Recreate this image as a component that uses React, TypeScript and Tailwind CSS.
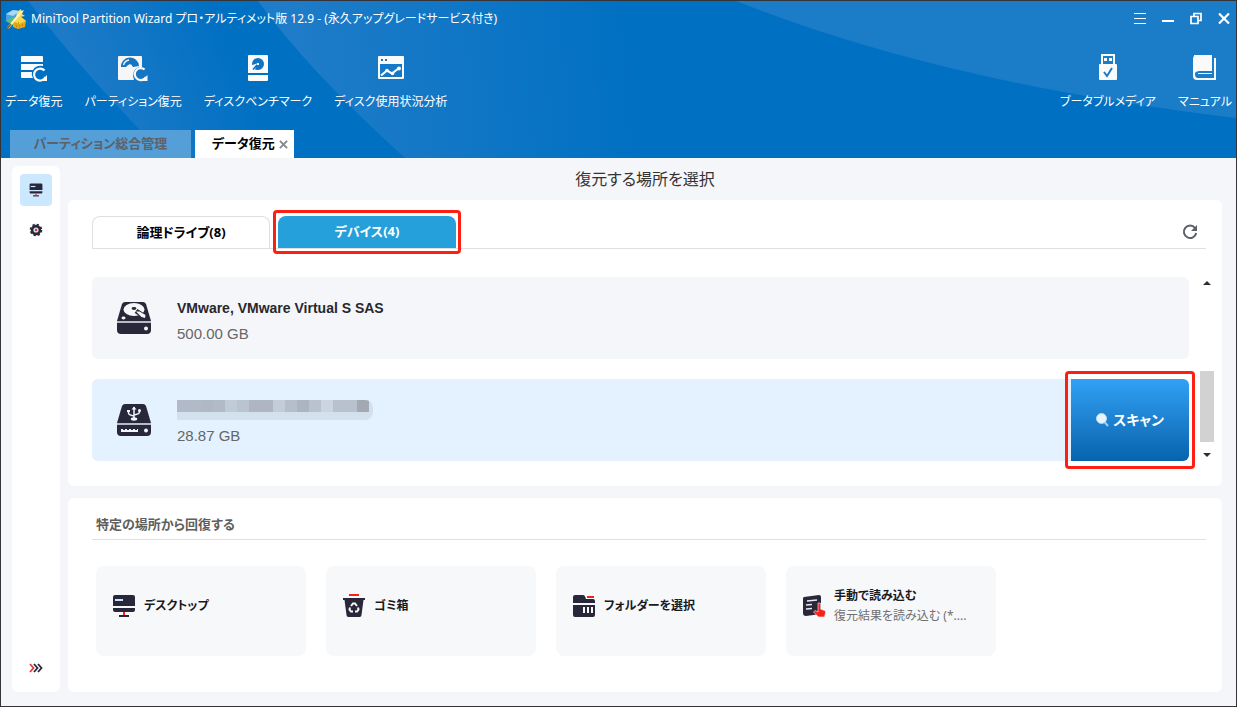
import React, { useState } from 'react';

const DARK = '#28283a';
const RED = '#f7231b';

const AppLogo: React.FC = () => (
  <svg width="22" height="22" viewBox="0 0 22 22" aria-hidden="true">
    <path d="M1 6 L8 2 L15 3 L14 12 L8 17 L1 13 Z" fill="#4aa3e0" />
    <path d="M1 6 L8 2 L15 3 L8 8 Z" fill="#a9d8f6" />
    <path d="M1 13 L8 17 L12 12 L9 9 Z" fill="#5fbf6a" />
    <path d="M8 13 L15 8 L21 13 L20 19 L13 21 L8 19 Z" fill="#e6a817" />
    <path d="M8 13 L15 8 L21 13 L14 16 Z" fill="#f9d64a" />
    <path d="M12 4 L16 1 L16 3 L19 2 L17 6 L20 8 L15 9 L11 10 Z" fill="#f6dc6b" />
    <path d="M17 3 L3 20" stroke="#fff3b8" strokeWidth="2" />
    <path d="M6 16 L2 21" stroke="#8a5a16" strokeWidth="1.5" />
    <path d="M11 18 h1 M14 18 h1 M17 17 h1 M13 15 h1" stroke="#a86c08" />
  </svg>
);

const DataRecoveryIcon: React.FC = () => (
  <svg width="28" height="30" viewBox="0 0 28 30" aria-hidden="true">
    <path d="M1 5 a1 1 0 0 1 1 -1 h20 a1 1 0 0 1 1 1 v5 h-22 z M1 12 h22 v2 q-7 -1 -10 4 h-12 z M1 20 h11 q-1 3 1 6 h-11 a1 1 0 0 1 -1 -1 z" fill="#fafafa" />
    <path d="M24.5 18.5 A6 6 0 1 0 25.6 25" fill="none" stroke="#fafafa" strokeWidth="2.2" />
    <path d="M27 23 v6 h-6 z" fill="#fafafa" />
  </svg>
);

const PartitionRecoveryIcon: React.FC = () => (
  <svg width="32" height="30" viewBox="0 0 32 30" aria-hidden="true">
    <path d="M2 4 h22 a1 1 0 0 1 1 1 v10 q-9 0 -9 9 l1 4 h-15 a1 1 0 0 1 -1 -1 v-22 a1 1 0 0 1 1 -1 z" fill="#f6f6f6" />
    <path d="M4 15 A9 9 0 0 1 22 14 L16 15 A4 4 0 0 0 9 15 Z" fill="#1576c4" />
    <path d="M6.500 13 A7 7 0 0 1 12 8" stroke="#f6f6f6" strokeWidth="1.400" fill="none" />
    <circle cx="13" cy="14.500" r="2.200" fill="#f6f6f6" />
    <circle cx="24" cy="22" r="7" fill="#1576c4" />
    <path d="M27.600 17.500 A6 6 0 1 0 29 25" fill="none" stroke="#fafafa" strokeWidth="2.200" />
    <path d="M30.500 23 v6 h-6 z" fill="#fafafa" />
  </svg>
);

const BenchmarkIcon: React.FC = () => (
  <svg width="22" height="30" viewBox="0 0 22 30" aria-hidden="true">
    <path d="M2 3 h18 a1 1 0 0 1 1 1 v17 h-20 v-17 a1 1 0 0 1 1 -1 z M1 23 h20 v5 a1 1 0 0 1 -1 1 h-18 a1 1 0 0 1 -1 -1 z" fill="#fafafa" />
    <circle cx="11" cy="12" r="6" fill="#0f74c3" />
    <path d="M10 11.500 L4 13.500 L7.500 18.500 Z" fill="#fafafa" />
    <path d="M10 13 L6 17.500" stroke="#0f74c3" strokeWidth="1.600" />
    <rect x="10" y="11" width="2" height="2" fill="#fafafa" />
  </svg>
);

const UsageIcon: React.FC = () => (
  <svg width="28" height="30" viewBox="0 0 28 30" aria-hidden="true">
    <path fillRule="evenodd" d="M2 4 h24 a1 1 0 0 1 1 1 v21 a1 1 0 0 1 -1 1 h-24 a1 1 0 0 1 -1 -1 v-21 a1 1 0 0 1 1 -1 z M3 12 v13 h22 v-13 z M4 7 v2 h2 v-2 z M8 7 v2 h2 v-2 z" fill="#fafafa" />
    <path d="M4 23.500 L10 18.500 L15 21.500 L22 16" stroke="#fafafa" strokeWidth="2.200" fill="none" />
    <circle cx="10" cy="18.500" r="1.800" fill="#fafafa" />
    <circle cx="15.500" cy="21.500" r="1.800" fill="#fafafa" />
    <circle cx="22" cy="16.500" r="2" fill="#fafafa" />
  </svg>
);

const UsbStickIcon: React.FC = () => (
  <svg width="20" height="30" viewBox="0 0 20 30" aria-hidden="true">
    <path fillRule="evenodd" d="M3 2 h14 v10 h1 a1 1 0 0 1 1 1 v14 a1 1 0 0 1 -1 1 h-16 a1 1 0 0 1 -1 -1 v-14 a1 1 0 0 1 1 -1 h1 z M5 4 v8 h10 v-8 z" fill="#fafafa" />
    <path d="M6 6 h3 v3 h-3 z M11 6 h3 v3 h-3 z" fill="#fafafa" />
    <path d="M6 20 L9 24 L14 16" stroke="#1b7cc8" strokeWidth="2" fill="none" />
  </svg>
);

const ManualIcon: React.FC = () => (
  <svg width="26" height="30" viewBox="0 0 26 30" aria-hidden="true">
    <path d="M5 3 h15 v16 h-13 q-4 0 -4 3 q0 4 3 4 h16 v-20 h2 v22 h-19 q-4 0 -4 -4 v-17 q0 -4 4 -4 z" fill="#fafafa" />
    <path d="M2 3 h5 v16 q-4 0 -5 2 z" fill="#fafafa" />
    <path d="M6 22 h14 v-1 h-14 z" fill="#fafafa" />
  </svg>
);

const MonitorIcon: React.FC<{ size: number }> = ({ size }) => (
  <svg width={size} height={size} viewBox="0 0 24 24" aria-hidden="true">
    <path d="M3 1 h18 a2 2 0 0 1 2 2 v9 h-22 v-9 a2 2 0 0 1 2 -2 z M1 14 h22 v2 a2 2 0 0 1 -2 2 h-18 a2 2 0 0 1 -2 -2 z" fill={DARK} />
    <rect x="3" y="5" width="8" height="2" fill="#cbe6fa" />
    <rect x="7" y="21" width="10" height="2" fill={DARK} />
    <rect x="11" y="18" width="2" height="3" fill={RED} />
  </svg>
);

const GearIcon: React.FC = () => (
  <svg width="14" height="14" viewBox="0 0 14 14" aria-hidden="true">
    <circle cx="7" cy="7" r="5.200" fill={DARK} />
    <circle cx="7" cy="7" r="5.500" fill="none" stroke={DARK} strokeWidth="1.600" strokeDasharray="2.400 1.920" />
    <circle cx="7" cy="7" r="2.600" fill="#d7e3ee" />
    <circle cx="7" cy="7" r="1.200" fill={RED} />
  </svg>
);

const ExpandIcon: React.FC = () => (
  <svg width="14" height="10" viewBox="0 0 14 10" fill="none" strokeWidth="1.800" aria-hidden="true">
    <path d="M1 1 L4.500 5 L1 9" stroke="#e33a34" />
    <path d="M5 1 L8.500 5 L5 9 M9 1 L12.500 5 L9 9" stroke={DARK} />
  </svg>
);

const DriveIcon: React.FC = () => (
  <svg width="36" height="34" viewBox="0 0 36 34" aria-hidden="true">
    <path d="M9 1 h18 q2 0 3 2 l5 17 h-34 l5 -17 q1 -2 3 -2 z" fill={DARK} />
    <path d="M1 22 h34 v7 q0 4 -4 4 h-26 q-4 0 -4 -4 z" fill={DARK} />
    <rect x="1" y="20" width="34" height="2" fill="#b9bac4" />
    <ellipse cx="18" cy="8.500" rx="10.500" ry="6.500" fill="#f5f6fa" />
    <ellipse cx="18" cy="7.500" rx="2.400" ry="1.400" fill={DARK} />
    <path d="M20 10 L31 17" stroke={DARK} strokeWidth="5" />
    <path d="M20 10.500 L23.500 10.500 L29.500 14 L29 17 L25.500 16 Z" fill="#f5f6fa" />
    <ellipse cx="7.500" cy="17" rx="2" ry="1.400" fill="#f5f6fa" />
    <circle cx="30" cy="27.500" r="2" fill="#f5f6fa" />
  </svg>
);

const UsbDriveIcon: React.FC = () => (
  <svg width="36" height="34" viewBox="0 0 36 34" aria-hidden="true">
    <path d="M9 1 h18 q2 0 3 2 l5 17 h-34 l5 -17 q1 -2 3 -2 z" fill={DARK} />
    <path d="M1 22 h34 v7 q0 4 -4 4 h-26 q-4 0 -4 -4 z" fill={DARK} />
    <rect x="1" y="20" width="34" height="2" fill="#b4bcc8" />
    <path d="M18 4 V16 M12.500 8 V10 Q12.500 12 18 13 M23.500 7 V9 Q23.500 11 18 12" stroke="#eef7ff" strokeWidth="1.500" fill="none" />
    <path d="M15.500 6.500 L18 3.500 L20.500 6.500 Z" fill="#eef7ff" />
    <ellipse cx="18" cy="16" rx="3.200" ry="1.700" fill="#eef7ff" />
    <rect x="11" y="7" width="3" height="2" fill="#eef7ff" />
    <circle cx="23.500" cy="7.500" r="1.500" fill="#eef7ff" />
    <path d="M5 26 h2 v1 h2 v-1 h2 v1 h2 v-1 h2 v1 h2 v-1 h2 v1 h2 v-1 h1 v3 h-17 z" fill="#eef7ff" />
    <circle cx="30" cy="27.500" r="2" fill="#eef7ff" />
  </svg>
);

const TrashIcon: React.FC = () => (
  <svg width="24" height="26" viewBox="0 0 24 26" aria-hidden="true">
    <rect x="7" y="1" width="10" height="2" fill={RED} />
    <path d="M1 5 h22 v2 h-1.500 l-2 15 q0 2 -2 2 h-11 q-2 0 -2 -2 l-2 -15 h-1.500 z" fill={DARK} />
    <g fill="none" stroke="#f7f8fa" strokeWidth="2">
      <path d="M9 13 L11 10.500 H13 L15 13" />
      <path d="M16 14.500 L16.500 16.500 L15 18.500 H13" />
      <path d="M11 18.500 H9 L7.500 16.500 L8 14.500" />
    </g>
  </svg>
);

const FolderIcon: React.FC = () => (
  <svg width="24" height="24" viewBox="0 0 24 24" aria-hidden="true">
    <path d="M3 1 h8 q2 0 3 4 h7 a2 2 0 0 1 2 2 v2 h-22 v-6 a2 2 0 0 1 2 -2 z M1 11 h22 v10 a2 2 0 0 1 -2 2 h-18 a2 2 0 0 1 -2 -2 z" fill={DARK} />
    <rect x="15" y="2" width="7" height="2" fill={RED} />
    <path d="M12 13 v6 M16 13 v6 M20 13 v6" stroke="#f7f8fa" strokeWidth="2" />
  </svg>
);

const LoadIcon: React.FC = () => (
  <svg width="24" height="24" viewBox="0 0 24 24" aria-hidden="true">
    <path d="M2 3 L17 1 q2 0 2 2 V20 L4 22 q-3 0 -3 -3 V5 q0 -2 1 -2 z" fill={DARK} />
    <path d="M5 7 L15 6 M4 11 L10 10.500 M4 15 L10 14.500" stroke="#e8eaf0" strokeWidth="1.600" />
    <path d="M16 9 h2.500 v6 l4 1.500 q1.500 .5 1 2.500 l-1 4 h-6 l-5 -5 l1.500 -1.500 l3 1.500 z" fill={RED} stroke="#f7f8fa" strokeWidth=".6" />
  </svg>
);

const RefreshIcon: React.FC = () => (
  <svg width="16" height="16" viewBox="0 0 16 16" aria-hidden="true">
    <path d="M13 4 A6.200 6.200 0 1 0 14.200 9" fill="none" stroke="#5c5f66" strokeWidth="2" />
    <path d="M15 1 V7 H9 Z" fill="#5c5f66" />
  </svg>
);

const MagnifierIcon: React.FC = () => (
  <svg width="13" height="14" viewBox="0 0 13 14" aria-hidden="true">
    <path d="M8.500 9 L12 13" stroke="#9ccdf5" strokeWidth="2" />
    <circle cx="5.500" cy="5.500" r="5" fill="#e8f3fc" stroke="#b4d9f7" />
  </svg>
);

const HeaderBackdrop: React.FC = () => (
  <svg className="absolute inset-0 h-full w-full" viewBox="0 0 1235 157" preserveAspectRatio="none" aria-hidden="true">
    <defs>
      <linearGradient id="facetLeft" x1="50" y1="90" x2="225" y2="20" gradientUnits="userSpaceOnUse">
        <stop offset="0.200" stopColor="#1c7ac7" />
        <stop offset="1" stopColor="#0070c2" />
      </linearGradient>
      <linearGradient id="facetMiddle" x1="290" y1="90" x2="640" y2="60" gradientUnits="userSpaceOnUse">
        <stop offset="0" stopColor="#1f7cc8" />
        <stop offset="1" stopColor="#0070c2" />
      </linearGradient>
    </defs>
    <path d="M27 0 H257 L404 157 H166 Q85 75 27 0 Z" fill="url(#facetLeft)" />
    <path d="M257 0 H640 V157 H404 Q306 68 257 0 Z" fill="url(#facetMiddle)" />
    <path d="M735 0 Q940 82 1235 117 V0 Z" fill="#1b7cc8" />
  </svg>
);

const leftTools = [
  { label: 'データ復元', icon: <DataRecoveryIcon /> },
  { label: 'パーティション復元', icon: <PartitionRecoveryIcon /> },
  { label: 'ディスクベンチマーク', icon: <BenchmarkIcon /> },
  { label: 'ディスク使用状況分析', icon: <UsageIcon /> },
];

const rightTools = [
  { label: 'ブータブルメディア', icon: <UsbStickIcon /> },
  { label: 'マニュアル', icon: <ManualIcon /> },
];

const places = [
  { title: 'デスクトップ', icon: <MonitorIcon size={24} /> },
  { title: 'ゴミ箱', icon: <TrashIcon /> },
  { title: 'フォルダーを選択', icon: <FolderIcon /> },
  { title: '手動で読み込む', note: '復元結果を読み込む (*....', icon: <LoadIcon /> },
];

// hidden device name, drawn as coarse blocks
const mosaic = [
  'bg-[#b3bac7]', 'bg-[#b3bac7]', 'bg-[#b0b8c5]', 'bg-[#b3bac7]', 'bg-[#c0cbd8]', 'bg-[#bac4d1]', 'bg-[#afb5c2]', 'bg-[#afb5c2]',
  'bg-[#c3cdda]', 'bg-[#b5bfcc]', 'bg-[#acb4c2]', 'bg-[#b9c2cf]', 'bg-[#cbd4e1]', 'bg-[#b8c1ce]', 'bg-[#b8c1ce]', 'bg-[#a3a8b3]',
];

interface ToolButtonProps {
  label: string;
  icon: React.ReactNode;
}

const ToolButton: React.FC<ToolButtonProps> = ({ label, icon }) => (
  <button type="button" className="flex flex-col items-center gap-3 whitespace-nowrap text-xs leading-4 text-white">
    {icon}
    <span>{label}</span>
  </button>
);

const App: React.FC = () => {
  const [tab, setTab] = useState<'drives' | 'devices'>('devices');

  const tabClass = (name: 'drives' | 'devices') =>
    tab === name
      ? 'h-8 w-full rounded-t-lg bg-[#26a0da] text-white'
      : 'h-8 w-full rounded-t-lg border border-b-0 border-[#e0e0e0] bg-white text-black';

  return (
    <div className="flex min-h-screen flex-col border border-[#333338] bg-[#f5f6fa] font-['Noto_Sans','Noto_Sans_CJK_JP',sans-serif] text-xs [font-feature-settings:'palt']">
      <header className="relative bg-[#0070c2]">
        <HeaderBackdrop />
        <div className="relative">
          <div className="flex h-[35px] items-center justify-between pr-1.5 pl-1">
            <div className="flex items-center gap-1">
              <AppLogo />
              <h1 className="text-xs text-white">MiniTool Partition Wizard プロ・アルティメット版 12.9 - (永久アップグレードサービス付き)</h1>
            </div>
            <div className="flex items-center gap-4">
              <button type="button" aria-label="メニュー">
                <svg width="12" height="14" viewBox="0 0 12 14"><path d="M0 1.500 h12 M0 6.500 h12 M0 11.500 h12" stroke="#fff" /></svg>
              </button>
              <button type="button" aria-label="最小化">
                <svg width="12" height="14" viewBox="0 0 12 14"><path d="M0 9 h12" stroke="#fff" strokeWidth="2" /></svg>
              </button>
              <button type="button" aria-label="元に戻す">
                <svg width="12" height="14" viewBox="0 0 12 14" fill="none" stroke="#fff" strokeWidth="1.700"><path d="M1 4.500 h7 v7 h-7 z M4 4 v-2.500 h7 v7 h-3" /></svg>
              </button>
              <button type="button" aria-label="閉じる">
                <svg width="12" height="14" viewBox="0 0 12 14"><path d="M1 1.500 L11 11.500 M11 1.500 L1 11.500" stroke="#fff" strokeWidth="2.200" /></svg>
              </button>
            </div>
          </div>

          <div className="flex justify-between px-1 pt-4 pb-5">
            <div className="flex gap-[22px]">
              {leftTools.map((tool) => <ToolButton key={tool.label} {...tool} />)}
            </div>
            <div className="flex gap-[22px]">
              {rightTools.map((tool) => <ToolButton key={tool.label} {...tool} />)}
            </div>
          </div>

          <div className="flex gap-1 pl-[9px]">
            <button type="button" className="h-7 w-[181px] bg-[#559fd8] text-[13px] font-bold text-[#5f6169]">パーティション総合管理</button>
            <div className="flex h-7 items-center gap-1 bg-white pr-[6px] pl-[17px]">
              <button type="button" className="text-[13px] font-bold text-black">データ復元</button>
              <button type="button" aria-label="タブを閉じる">
                <svg width="9" height="9" viewBox="0 0 10 10"><path d="M1 1 L9 9 M9 1 L1 9" stroke="#85858b" strokeWidth="2" /></svg>
              </button>
            </div>
          </div>
        </div>
      </header>

      <div className="flex flex-1 gap-2 pt-2 pr-3.5 pb-3.5 pl-[11px]">
        <nav className="flex w-12 shrink-0 flex-col items-center gap-2 rounded-md bg-white py-2">
          <button type="button" aria-label="ドライブ" className="flex size-8 items-center justify-center rounded bg-[#cce8ff]"><MonitorIcon size={14} /></button>
          <button type="button" aria-label="設定" className="flex size-8 items-center justify-center"><GearIcon /></button>
          <button type="button" aria-label="展開" className="mt-auto flex size-8 items-center justify-center"><ExpandIcon /></button>
        </nav>

        <main className="flex min-w-0 flex-1 flex-col">
          <h2 className="mb-2 text-center text-base leading-[26px] text-[#333]">復元する場所を選択</h2>

          <section className="rounded-md bg-white pt-4 pb-[25px] pl-6">
            <div className="mr-4 flex items-end gap-2 border-b border-[#e0e0e0]">
              <div className="w-[178px]">
                <button type="button" onClick={() => setTab('drives')} className={`${tabClass('drives')} text-[13px] font-bold`}>論理ドライブ(8)</button>
              </div>
              <div className="relative w-[178px]">
                <button type="button" onClick={() => setTab('devices')} className={`${tabClass('devices')} text-[13px] font-bold`}>デバイス(4)</button>
                <div className="pointer-events-none absolute -inset-x-[5px] -inset-y-[6px] rounded border-3 border-[#fb2012]" />
              </div>
              <button type="button" aria-label="更新" className="mr-2 mb-2 ml-auto"><RefreshIcon /></button>
            </div>

            <div className="mt-7 flex gap-[11px] pr-2">
              <ul className="flex flex-1 flex-col gap-5">
                <li className="flex h-[82px] items-center gap-[25px] rounded-md bg-[#f5f6fa] pl-6">
                  <DriveIcon />
                  <div className="pt-[5px] font-['Liberation_Sans',sans-serif]">
                    <p className="text-sm leading-[26px] font-bold text-[#28282c]">VMware, VMware Virtual S SAS</p>
                    <p className="text-[15px] leading-[26px] text-[#666]">500.00 GB</p>
                  </div>
                </li>
                <li className="flex h-[82px] items-center gap-[25px] rounded-md bg-[#e3f2fe] pl-6">
                  <UsbDriveIcon />
                  <div className="pt-[5px] font-['Liberation_Sans',sans-serif]">
                    <div className="flex h-[26px] items-center">
                      <div className="overflow-hidden rounded-r-lg bg-[#d3e0ed]">
                        <div className="flex pr-1">
                          {mosaic.map((color, i) => <span key={i} className={`h-3 w-3 ${color}`} />)}
                        </div>
                        <div className="h-2" />
                      </div>
                    </div>
                    <p className="text-[15px] leading-[26px] text-[#666]">28.87 GB</p>
                  </div>
                  <div className="relative ml-auto h-full w-[118px]">
                    <button type="button" className="flex h-full w-full items-center justify-center gap-1 rounded-r-md bg-linear-to-b from-[#31a1f5] to-[#0763ac] text-sm font-bold text-white">
                      <MagnifierIcon />
                      スキャン
                    </button>
                    <div className="pointer-events-none absolute -inset-x-[6px] -inset-y-2 rounded border-3 border-[#fb2012]" />
                  </div>
                </li>
              </ul>

              <div className="flex w-3.5 flex-col items-center justify-between py-1" aria-hidden="true">
                <svg width="8" height="4" viewBox="0 0 8 4"><path d="M0 4 L4 0 L8 4 Z" fill="#2e2e38" /></svg>
                <div className="mt-auto mb-[11px] h-[71px] w-full bg-[#d2d2d2]" />
                <svg width="8" height="4" viewBox="0 0 8 4"><path d="M0 0 L4 4 L8 0 Z" fill="#2e2e38" /></svg>
              </div>
            </div>
          </section>

          <section className="mt-3 flex-1 rounded-md bg-white pt-3.5 pl-6">
            <h3 className="mr-4 border-b border-[#e0e0e0] pb-[3px] pl-1 text-[13px] leading-6 font-bold text-[#5e5e5e]">特定の場所から回復する</h3>
            <div className="mt-[26px] flex flex-wrap gap-5 pl-1">
              {places.map((place) => (
                <button key={place.title} type="button" className="flex h-[90px] w-[210px] items-center gap-2 rounded-lg bg-[#f7f8fa] pb-2.5 pl-4 text-left">
                  {place.icon}
                  <span>
                    <span className="block leading-5 font-bold text-[#1a1a1c]">{place.title}</span>
                    {place.note && <span className="block leading-5 text-[#707070]">{place.note}</span>}
                  </span>
                </button>
              ))}
            </div>
          </section>
        </main>
      </div>
    </div>
  );
};

export default App;
